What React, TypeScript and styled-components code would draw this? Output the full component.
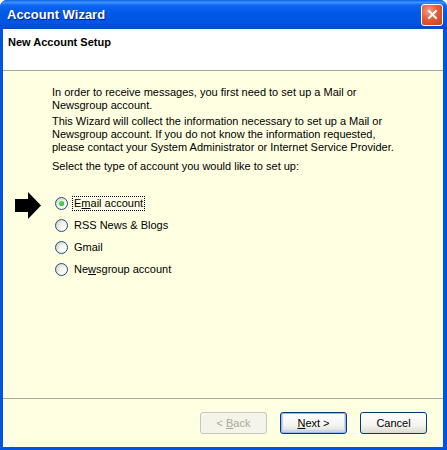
import React from "react";
import styled, { createGlobalStyle } from "styled-components";

const Global = createGlobalStyle`
  html, body { margin: 0; padding: 0; background: #fff; }
  body { font-family: "Liberation Sans", Arial, sans-serif; font-size: 11px; }
`;

const Window = styled.div`
  width: 447px;
  height: 450px;
  display: flex;
  flex-direction: column;
  background: #0054e3;
  border-radius: 7px 7px 0 0;
  overflow: hidden;
`;

const TitleBar = styled.div`
  height: 29px;
  flex: none;
  display: flex;
  align-items: center;
  justify-content: space-between;
  padding: 0 4px 0 7px;
  background: linear-gradient(
    to bottom,
    #0a5fe8 0%,
    #3d95ff 8%,
    #0f66f0 18%,
    #0058e6 45%,
    #0054e3 80%,
    #0049c6 100%
  );
`;

const Title = styled.span`
  font-family: "Liberation Sans", Arial, sans-serif;
  font-weight: bold;
  font-size: 13px;
  color: #fff;
  text-shadow: 1px 1px 0 #0a1e82;
`;

const CloseButton = styled.div`
  width: 22px;
  height: 22px;
  box-sizing: border-box;
  border: 1px solid #fff;
  border-radius: 3px;
  background: radial-gradient(circle at 35% 30%, #f0a08a 0%, #e55b35 45%, #c8401f 100%);
  display: flex;
  align-items: center;
  justify-content: center;
`;

const Frame = styled.div`
  flex: 1;
  display: flex;
  flex-direction: column;
  margin: 0 4px 3px 3px;
  background: #ffffe1;
`;

const Header = styled.div`
  height: 42px;
  flex: none;
  background: #fff;
  border-bottom: 1px solid #aca899;
  padding: 7px 0 0 5px;
  box-sizing: border-box;
  font-weight: bold;
  font-size: 11px;
  font-family: "Liberation Sans", Arial, sans-serif;
  color: #000;
`;

const Content = styled.div`
  flex: 1;
  padding: 15px 0 0 49px;
  color: #000;
`;

const Para = styled.p<{ $gap?: number }>`
  margin: 0 0 ${(p) => p.$gap ?? 3}px 0;
  line-height: 13px;
`;

const Options = styled.div`
  position: relative;
  margin-top: 24px;
  display: flex;
  flex-direction: column;
  gap: 9px;
`;

const Pointer = styled.svg`
  position: absolute;
  left: -37px;
  top: -5px;
`;

const Option = styled.label`
  display: flex;
  align-items: center;
  height: 13px;
  padding-left: 3px;
  gap: 5px;
`;

const Radio = styled.span<{ $checked?: boolean }>`
  width: 13px;
  height: 13px;
  box-sizing: border-box;
  border-radius: 50%;
  border: 1px solid #1c5180;
  background: radial-gradient(circle at 70% 70%, #ffffff 0%, #f4f3ee 40%, #c9c7ba 100%);
  display: flex;
  align-items: center;
  justify-content: center;
  &::after {
    content: "";
    display: ${(p) => (p.$checked ? "block" : "none")};
    width: 5px;
    height: 5px;
    border-radius: 50%;
    background: radial-gradient(circle at 35% 35%, #5ee05e, #21a121);
  }
`;

const Label = styled.span<{ $focus?: boolean }>`
  padding: 0 1px;
  line-height: 13px;
  outline: ${(p) => (p.$focus ? "1px dotted #000" : "none")};
  outline-offset: 0;
`;

const Footer = styled.div`
  height: 49px;
  flex: none;
  border-top: 1px solid #aca899;
  display: flex;
  justify-content: flex-end;
  align-items: flex-start;
  gap: 13px;
  padding: 13px 16px 0 0;
  box-sizing: border-box;
`;

const Button = styled.button<{ $default?: boolean }>`
  width: 67px;
  height: 22px;
  font-family: "Liberation Sans", Arial, sans-serif;
  font-size: 11px;
  color: ${(p) => (p.disabled ? "#aca899" : "#000")};
  border: 1px solid ${(p) => (p.disabled ? "#c9c7ba" : "#003c74")};
  border-radius: 3px;
  background: ${(p) =>
    p.disabled ? "#f5f4ea" : "linear-gradient(to bottom, #ffffff 0%, #f4f4f0 60%, #dcdad0 100%)"};
  box-shadow: ${(p) =>
    p.$default ? "inset 0 0 0 1px #98b8ea, inset 0 -1px 0 2px #c6d6f4" : "none"};
  padding: 0;
  u { text-decoration: underline; }
`;

export default function App() {
  return (
    <>
      <Global />
      <Window>
        <TitleBar>
          <Title>Account Wizard</Title>
          <CloseButton>
            <svg width="11" height="11" viewBox="0 0 11 11">
              <path d="M2 2 L9 9 M9 2 L2 9" stroke="#fff" strokeWidth="2" strokeLinecap="square" />
            </svg>
          </CloseButton>
        </TitleBar>
        <Frame>
          <Header>New Account Setup</Header>
          <Content>
            <Para>
              In order to receive messages, you first need to set up a Mail or
              <br />
              Newsgroup account.
            </Para>
            <Para $gap={6}>
              This Wizard will collect the information necessary to set up a Mail or
              <br />
              Newsgroup account. If you do not know the information requested,
              <br />
              please contact your System Administrator or Internet Service Provider.
            </Para>
            <Para>Select the type of account you would like to set up:</Para>
            <Options>
              <Pointer width="27" height="27" viewBox="0 0 27 27">
                <path d="M0 7 H13 V0 L26 13.5 L13 27 V20 H0 Z" fill="#000" />
              </Pointer>
              <Option>
                <Radio $checked />
                <Label $focus>
                  E<u>m</u>ail account
                </Label>
              </Option>
              <Option>
                <Radio />
                <Label>RSS News &amp; Blogs</Label>
              </Option>
              <Option>
                <Radio />
                <Label>Gmail</Label>
              </Option>
              <Option>
                <Radio />
                <Label>
                  Ne<u>w</u>sgroup account
                </Label>
              </Option>
            </Options>
          </Content>
          <Footer>
            <Button disabled>
              &lt; <u>B</u>ack
            </Button>
            <Button $default>
              <u>N</u>ext &gt;
            </Button>
            <Button>Cancel</Button>
          </Footer>
        </Frame>
      </Window>
    </>
  );
}
